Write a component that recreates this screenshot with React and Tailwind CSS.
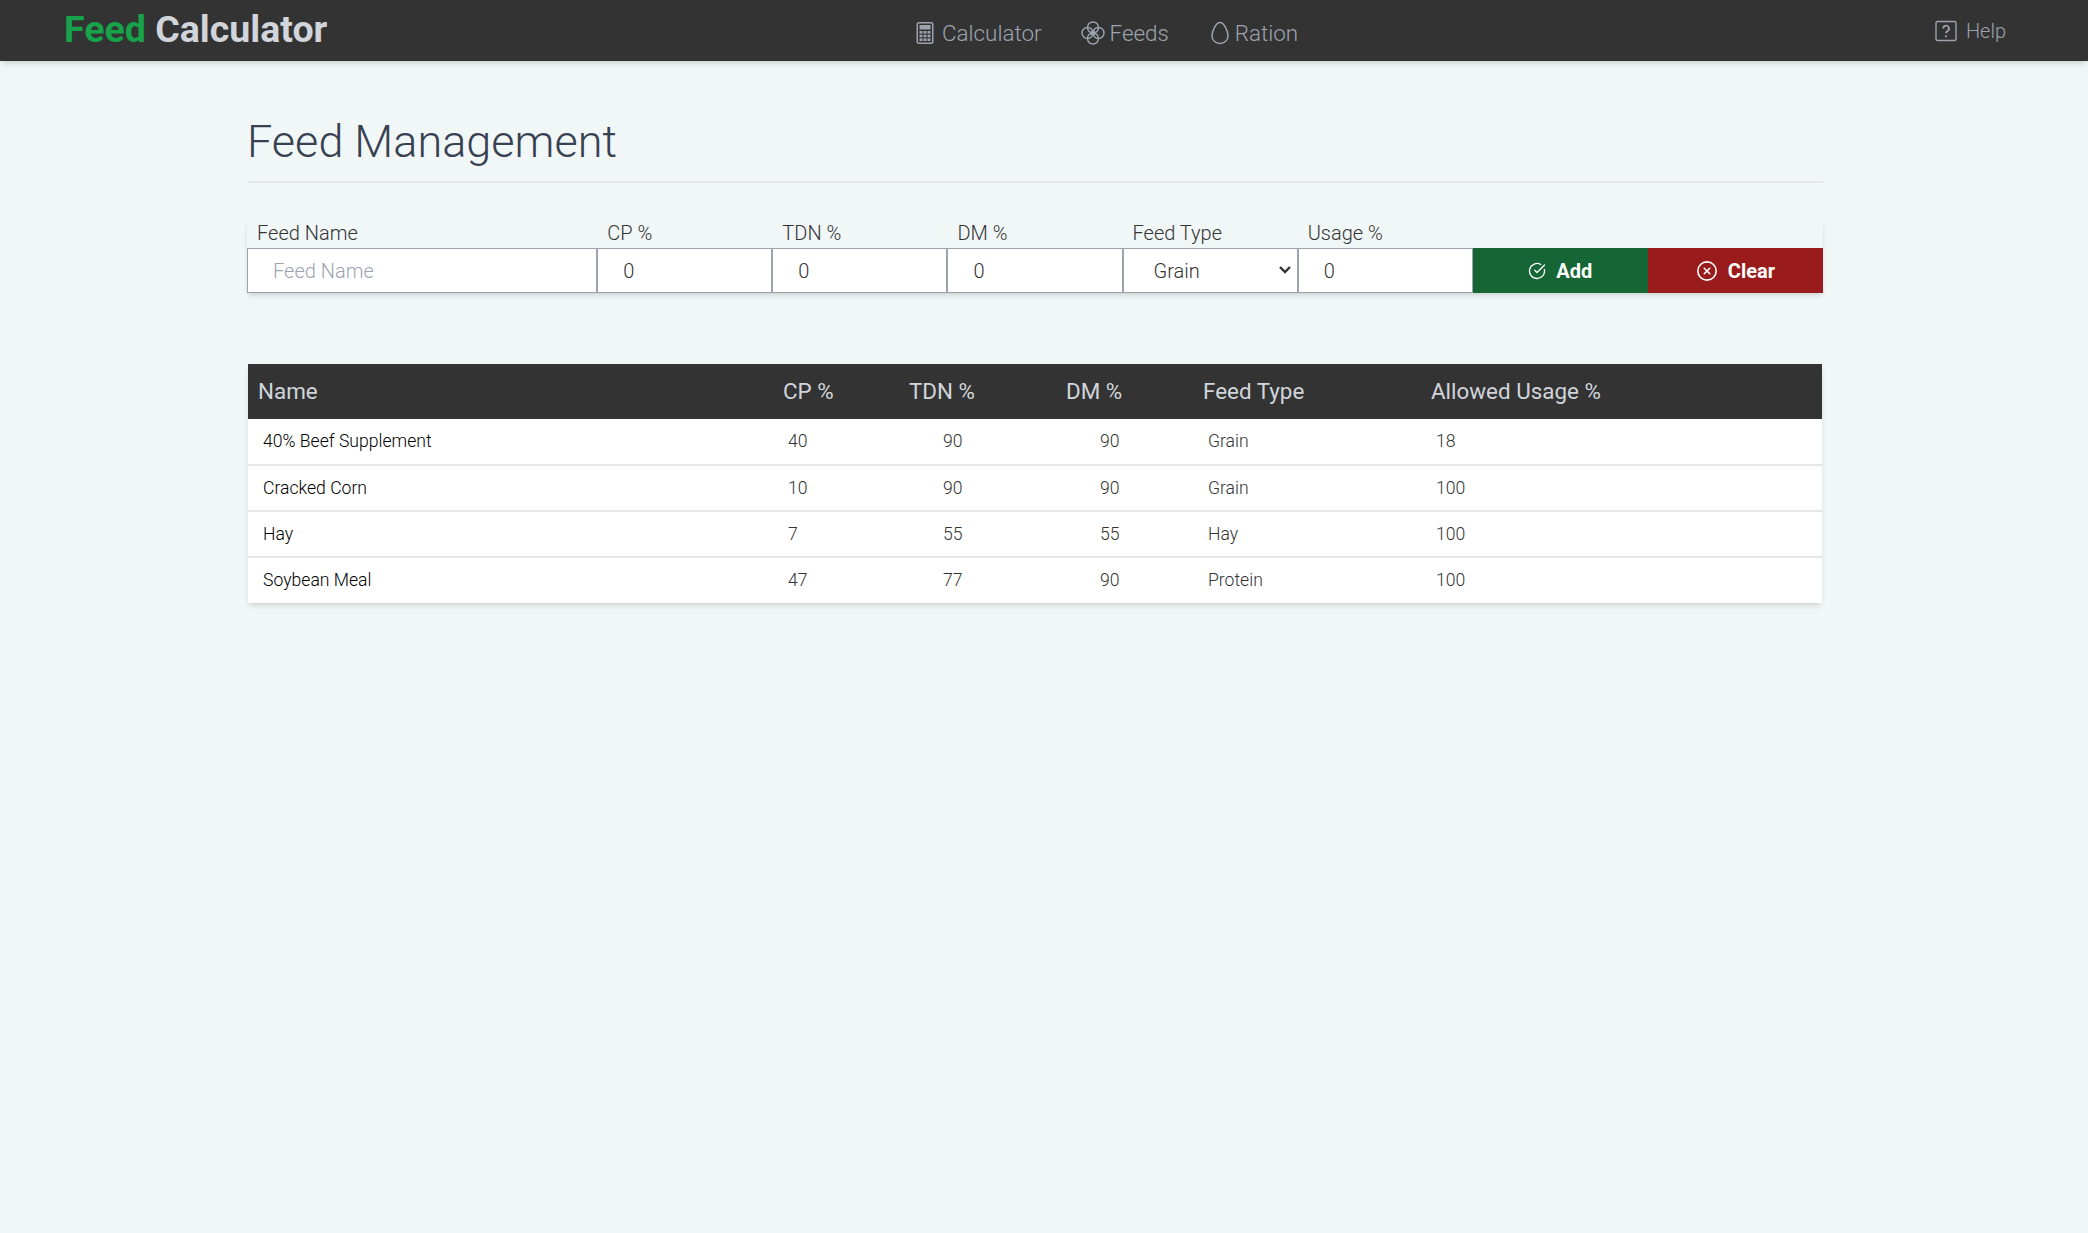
import { CircleCheckBig, CircleX } from "lucide-react";

const feeds = [
    { name: "40% Beef Supplement", cp: 40, tdn: 90, dm: 90, type: "Grain", usage: 18 },
    { name: "Cracked Corn", cp: 10, tdn: 90, dm: 90, type: "Grain", usage: 100 },
    { name: "Hay", cp: 7, tdn: 55, dm: 55, type: "Hay", usage: 100 },
    { name: "Soybean Meal", cp: 47, tdn: 77, dm: 90, type: "Protein", usage: 100 },
];

function FlowerIcon() {
    return (
        <svg viewBox="0 0 24 24" className="w-[24px] h-[24px]" fill="none" stroke="currentColor" strokeWidth="1.4">
            <circle cx="12" cy="6.500" r="5.500" />
            <circle cx="12" cy="17.500" r="5.500" />
            <circle cx="6.500" cy="12" r="5.500" />
            <circle cx="17.500" cy="12" r="5.500" />
            <circle cx="12" cy="12" r="1.800" fill="currentColor" />
        </svg>
    );
}

function EggIcon() {
    return (
        <svg viewBox="0 0 24 24" className="w-[24px] h-[24px]" fill="none" stroke="currentColor" strokeWidth="1.5">
            <path d="M12 1.500C8 1.500 4 10 4 15a8 7.500 0 0 0 16 0C20 10 16 1.500 12 1.500z" />
        </svg>
    );
}

function CalcIcon() {
    return (
        <svg viewBox="0 0 24 24" className="w-[24px] h-[24px]" fill="currentColor">
            <path fillRule="evenodd" d="M6 1h12a2.500 2.500 0 0 1 2.500 2.500v17A2.500 2.500 0 0 1 18 23H6a2.500 2.500 0 0 1-2.500-2.500v-17A2.500 2.500 0 0 1 6 1zm0 1.500a1 1 0 0 0-1 1v17a1 1 0 0 0 1 1h12a1 1 0 0 0 1-1v-17a1 1 0 0 0-1-1z" />
            <rect x="6.500" y="4" width="11" height="4.500" />
            <rect x="6.500" y="10" width="3" height="2.600" />
            <rect x="10.500" y="10" width="3" height="2.600" />
            <rect x="14.500" y="10" width="3" height="2.600" />
            <rect x="6.500" y="13.700" width="3" height="2.600" />
            <rect x="10.500" y="13.700" width="3" height="2.600" />
            <rect x="14.500" y="13.700" width="3" height="2.600" />
            <rect x="6.500" y="17.400" width="3" height="2.600" />
            <rect x="10.500" y="17.400" width="3" height="2.600" />
            <rect x="14.500" y="17.400" width="3" height="2.600" />
        </svg>
    );
}

function Field({ label, span, children }) {
    return (
        <div className={span ? "col-span-2 flex flex-col" : "flex flex-col"}>
            <label className="h-[30px] pl-[10px] pt-[2px] text-[20px] leading-[26px] font-light text-[#333]">{label}</label>
            {children}
        </div>
    );
}

const inputClass = "h-[45px] w-full bg-white border border-[#9ca3af] pl-[25px] text-[20px] font-light text-[#333] placeholder:text-[#9ca3af] outline-none";

export default function App() {
    return (
        <div className="min-h-[1233px] bg-[#f1f7f7] font-['Roboto',sans-serif]">
            <nav className="relative h-[61px] bg-[#333333] shadow-md flex items-center justify-between pl-[64px] pr-[82px]">
                <div className="text-[37.5px] leading-[58px] font-bold -mt-[3px]">
                    <span className="text-[#16a34a]">Feed</span> <span className="text-[#d1d5db]">Calculator</span>
                </div>
                <div className="absolute left-[913px] top-[3px] h-[61px] flex items-center gap-[39px] text-[22.4px] font-light text-[#9ca3af]">
                    <a className="flex items-center gap-[5px]"><CalcIcon />Calculator</a>
                    <a className="flex items-center gap-[5px]"><FlowerIcon />Feeds</a>
                    <a className="flex items-center gap-[3px]"><EggIcon />Ration</a>
                </div>
                <a className="flex items-center gap-[9px] text-[20px] font-light text-[#9ca3af]">
                    <svg viewBox="0 0 22 22" className="w-[22px] h-[22px]" fill="none" stroke="currentColor" strokeWidth="1.4">
                        <rect x="1" y="1.500" width="20" height="19" rx="1.500" />
                        <path d="M8.200 8.500a2.900 2.900 0 1 1 4.300 2.500c-1 .6-1.500 1.100-1.500 2.200" strokeWidth="1.800" />
                        <circle cx="11" cy="16.300" r="1.100" fill="currentColor" stroke="none" />
                    </svg>
                    Help
                </a>
            </nav>

            <main className="w-[1576px] ml-[247px]">
                <h1 className="mt-[55px] h-[67px] border-b-2 border-[#e5e7eb] text-[45px] leading-[52px] font-light text-[#374151]">Feed Management</h1>

                <div className="mt-[35px] grid grid-cols-9 shadow-md">
                    <Field label="Feed Name" span>
                        <input className={inputClass} placeholder="Feed Name" />
                    </Field>
                    <Field label="CP %">
                        <input className={inputClass} defaultValue="0" />
                    </Field>
                    <Field label="TDN %">
                        <input className={inputClass} defaultValue="0" />
                    </Field>
                    <Field label="DM %">
                        <input className={inputClass} defaultValue="0" />
                    </Field>
                    <Field label="Feed Type">
                        <div className="relative">
                            <select className="appearance-none h-[45px] w-full bg-white border border-[#9ca3af] pl-[30px] text-[20px] font-light text-[#333] outline-none" defaultValue="Grain">
                                <option>Grain</option>
                                <option>Hay</option>
                                <option>Protein</option>
                            </select>
                            <svg viewBox="0 0 12 8" className="absolute right-[7px] top-[18px] w-[12px] h-[8px] text-[#333]" fill="none" stroke="currentColor" strokeWidth="2.400">
                                <path d="M1 1l5 5 5-5" />
                            </svg>
                        </div>
                    </Field>
                    <Field label="Usage %">
                        <input className={inputClass} defaultValue="0" />
                    </Field>
                    <div className="flex flex-col justify-end">
                        <button className="h-[45px] bg-[#166534] text-white text-[20px] font-bold flex items-center justify-center gap-[10px]">
                            <CircleCheckBig className="w-[18px] h-[18px]" strokeWidth={1.75} />Add
                        </button>
                    </div>
                    <div className="flex flex-col justify-end">
                        <button className="h-[45px] bg-[#991b1b] text-white text-[20px] font-bold flex items-center justify-center gap-[10px]">
                            <CircleX className="w-[22px] h-[22px]" strokeWidth={1.75} />Clear
                        </button>
                    </div>
                </div>

                <table className="mt-[71px] ml-[1px] w-[1574px] table-fixed bg-white shadow-md">
                    <colgroup>
                        <col className="w-[525px]" />
                        <col className="w-[126px]" />
                        <col className="w-[157px]" />
                        <col className="w-[137px]" />
                        <col className="w-[228px]" />
                        <col />
                    </colgroup>
                    <thead>
                        <tr className="h-[55px] bg-[#333333] text-[#d1d5db] text-[22.4px] text-left">
                            <th className="pl-[10px] font-normal">Name</th>
                            <th className="pl-[10px] font-normal">CP %</th>
                            <th className="pl-[10px] font-normal">TDN %</th>
                            <th className="pl-[10px] font-normal">DM %</th>
                            <th className="pl-[10px] font-normal">Feed Type</th>
                            <th className="pl-[10px] font-normal">Allowed Usage %</th>
                        </tr>
                    </thead>
                    <tbody className="text-[17.6px] font-light text-[#333]">
                        {feeds.map((feed, i) => (
                            <tr key={feed.name} className={i < feeds.length - 1 ? "h-[46px] border-b-2 border-[#e5e7eb]" : "h-[46px]"}>
                                <td className="pl-[15px] text-black">{feed.name}</td>
                                <td className="pl-[15px]">{feed.cp}</td>
                                <td className="pl-[44px]">{feed.tdn}</td>
                                <td className="pl-[44px]">{feed.dm}</td>
                                <td className="pl-[15px]">{feed.type}</td>
                                <td className="pl-[15px]">{feed.usage}</td>
                            </tr>
                        ))}
                    </tbody>
                </table>
            </main>
        </div>
    );
}
